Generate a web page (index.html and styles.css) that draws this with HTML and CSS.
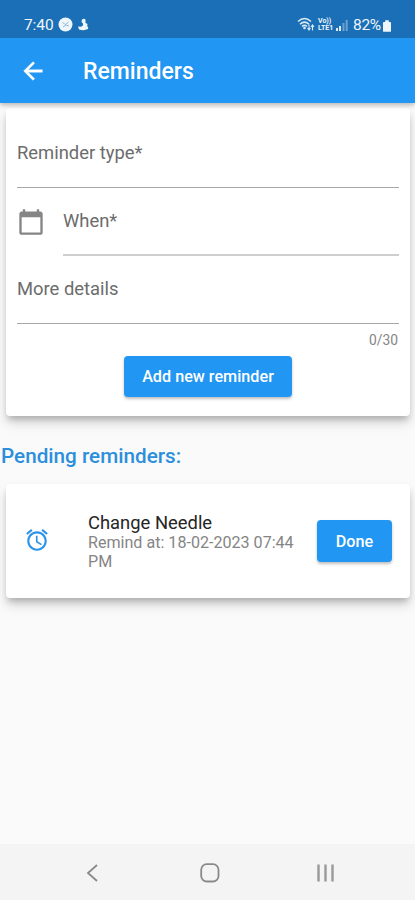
FILE: index.html
```html
<!DOCTYPE html>
<html lang="en">
<head>
<meta charset="utf-8">
<title>Reminders</title>
<link rel="stylesheet" href="styles.css">
</head>
<body>
<div class="status">
  <span class="clock">7:40</span>
  <svg class="ball" width="15" height="15" viewBox="0 0 15 15"><circle cx="7.500" cy="7.500" r="7" fill="#eff6fb"/><path d="M4.500 5.500l3 2 3-2.500M5 10l3-2 3 1" fill="none" stroke="#8db9dd" stroke-width="1"/></svg>
  <svg class="bird" width="11" height="13" viewBox="0 0 11 13"><path d="M4 1.500Q6 0 7.500 1.500V5Q10.500 5.500 9 8Q11 9 10 11Q6 13 1 11.500L0 8.500L3 8.700Q5.500 8 5 5.500L3.500 4Z" fill="#eff6fb"/></svg>
  <svg class="wifi" width="18" height="15" viewBox="0 0 18 15"><g fill="none" stroke="#dceaf6" stroke-width="1.500"><path d="M1 4.500Q7.500-1.500 14 4.500M3 7.200Q7.500 3 12 7.200M5 9.500Q7.500 7.300 10 9.500"/><path d="M12 7.500v5M10.500 11l1.500 2 1.500-2M15.500 13.500v-5M14 10l1.500-2 1.500 2" stroke-width="1.100"/></g><circle cx="7.500" cy="11" r="1.300" fill="#dceaf6"/></svg>
  <span class="volte"><span>Vo))</span><span>LTE1</span></span>
  <svg class="signal" width="12" height="11" viewBox="0 0 12 11"><path d="M0 8h2v3H0zM3 6h2v5H3z" fill="#dceaf6"/><path d="M6.500 3h2v8h-2zM9.700 0h2v11h-2z" fill="#6ba2d0"/></svg>
  <span class="percent">82%</span>
  <svg class="battery" width="8" height="12" viewBox="0 0 9 13"><path d="M2.500 0h4v2H8q1 0 1 1v9q0 1-1 1H1q-1 0-1-1V3q0-1 1-1h1.500z" fill="#eff6fb"/></svg>
</div>
<header class="appbar">
  <svg width="28" height="28" viewBox="0 0 24 24"><path d="M20 11H7.830l5.590-5.590L12 4l-8 8 8 8 1.410-1.410L7.830 13H20v-2z" fill="#fff" stroke="#fff" stroke-width=".4"/></svg>
  <h1>Reminders</h1>
</header>
<main>
  <section class="card form">
    <div class="field"><span class="label">Reminder type*</span></div>
    <div class="row">
      <svg width="28" height="28" viewBox="0 0 24 24"><path d="M20 3h-1V1h-2v2H7V1H5v2H4c-1.100 0-2 .9-2 2v16c0 1.100.9 2 2 2h16c1.100 0 2-.9 2-2V5c0-1.100-.9-2-2-2zm0 18H4V8h16v13z" fill="#858585"/></svg>
      <div class="field when"><span class="label">When*</span></div>
    </div>
    <div class="field"><span class="label">More details</span></div>
    <div class="counter">0/30</div>
    <button class="add">Add new reminder</button>
  </section>
  <h2>Pending reminders:</h2>
  <section class="card item">
    <svg class="alarm" width="26" height="26" viewBox="0 0 24 24"><path d="M22 5.720l-4.600-3.860-1.290 1.530 4.600 3.860L22 5.720zM7.880 3.390L6.600 1.860 2 5.710l1.290 1.530 4.590-3.850zM12.500 8H11v6l4.750 2.850.75-1.230-4-2.370V8zM12 4c-4.970 0-9 4.030-9 9s4.020 9 9 9c4.970 0 9-4.030 9-9s-4.030-9-9-9zm0 16c-3.870 0-7-3.130-7-7s3.130-7 7-7 7 3.130 7 7-3.130 7-7 7z" fill="#2b94e8"/></svg>
    <div class="info"><div class="title">Change Needle</div><div class="time">Remind at: 18-02-2023 07:44<br>PM</div></div>
    <button class="done">Done</button>
  </section>
</main>
<nav>
  <svg width="20" height="20" viewBox="0 0 20 20"><path d="M14 2L5 10l9 8" fill="none" stroke="#8a8a8a" stroke-width="1.800"/></svg>
  <svg width="20" height="20" viewBox="0 0 20 20"><rect x="1.200" y="1.200" width="17.300" height="17.300" rx="5.500" fill="none" stroke="#8a8a8a" stroke-width="1.800"/></svg>
  <svg width="20" height="20" viewBox="0 0 20 20"><path d="M2.500 1.500v17M9.500 1.500v17M16.500 1.500v17" fill="none" stroke="#999" stroke-width="2.400"/></svg>
</nav>
</body>
</html>
```
FILE: styles.css
```css
* { box-sizing: border-box; }
body {
  margin: 0;
  height: 900px;
  display: flex;
  flex-direction: column;
  overflow: hidden;
  background: #fafafa;
  font-family: Roboto, sans-serif;
}
svg { display: block; flex: none; }
h1, h2 { margin: 0; font-weight: 500; white-space: nowrap; }
button { border: 0; padding: 0; font-family: inherit; color: #fff; }

.status {
  flex: none;
  height: 38px;
  padding: 11px 0 0 24px;
  display: flex;
  align-items: center;
  position: relative;
  z-index: 1;
  background: #1a6fb6;
  color: #eff6fb;
  font-size: 15.5px;
}
.clock { width: 34px; letter-spacing: -0.1px; }
.bird { margin-left: 5px; }
.wifi { margin-left: 208px; }
.volte {
  width: 17px;
  margin-left: 3px;
  font-size: 7px;
  line-height: 7px;
  font-weight: 700;
}
.volte span { display: block; }
.signal { margin: 2px 5px 0 1px; }
.percent { width: 30px; letter-spacing: -0.3px; }
.battery { margin-top: 2px; }

.appbar {
  flex: none;
  height: 65px;
  padding: 1px 0 0 19px;
  display: flex;
  align-items: center;
  gap: 36px;
  position: relative;
  background: #2196f3;
  color: #fff;
  box-shadow: 0 2px 5px rgba(0, 0, 0, 0.28);
}
.appbar h1 { font-size: 23px; }

main { flex: 1; padding-top: 5px; }
.card {
  margin: 0 5px 0 6px;
  background: #fff;
  border-radius: 4px;
  box-shadow: 0 5px 6px -2px rgba(0, 0, 0, 0.2), 0 7px 12px rgba(0, 0, 0, 0.15);
}
.form {
  height: 308px;
  padding: 12px 11px 0 11px;
  display: flex;
  flex-direction: column;
}
.field {
  height: 68px;
  padding-top: 21px;
  border-bottom: 1px solid #a8a8a8;
}
.label {
  display: block;
  color: #6c6c6c;
  font-size: 18.4px;
  line-height: 24px;
  white-space: nowrap;
}
.row { display: flex; align-items: center; }
.when { flex: 1; margin-left: 18px; border-bottom: 2px solid #cfcfcf; }
.counter {
  height: 32px;
  padding: 7px 1px 0 0;
  text-align: right;
  font-size: 13.8px;
  line-height: 18px;
  color: #858585;
}
.add, .done {
  background: #2196f3;
  border-radius: 4px;
  font-weight: 500;
  font-size: 16.2px;
  box-shadow: 0 2px 3px rgba(0, 0, 0, 0.25);
}
.add { width: 168px; height: 41px; margin-left: 107px; white-space: nowrap; }

h2 {
  height: 68px;
  padding: 26px 0 0 1px;
  font-size: 20.7px;
  line-height: 28px;
  color: #2b8fdc;
}
.item {
  height: 114px;
  padding: 0 18px;
  display: flex;
  align-items: center;
}
.alarm { margin-bottom: 3px; }
.info { flex: 1; margin-left: 38px; padding-top: 1px; white-space: nowrap; }
.title { font-size: 18.4px; line-height: 22px; color: #252525; }
.time { font-size: 16.1px; line-height: 18.5px; color: #858585; }
.done { width: 75px; height: 42px; }

nav {
  flex: none;
  height: 56px;
  padding: 2px 79px 0 83px;
  display: flex;
  align-items: center;
  justify-content: space-between;
  background: #f4f4f4;
}
```
